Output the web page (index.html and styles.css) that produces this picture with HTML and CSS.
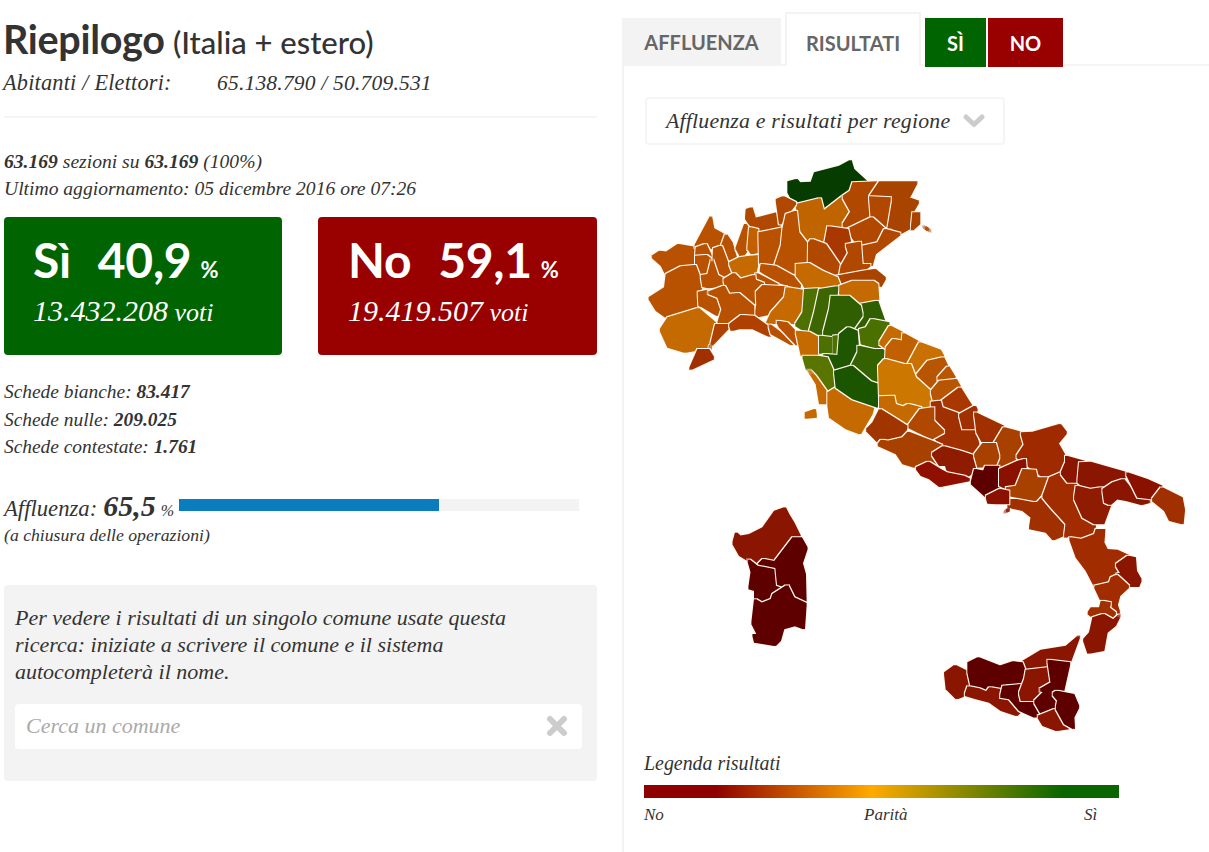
FILE: index.html
```html
<!DOCTYPE html>
<html lang="it">
<head>
<meta charset="utf-8">
<title>Riepilogo</title>
<link rel="stylesheet" href="styles.css">
</head>
<body>
<main class="page">
  <section class="left">
    <h1 class="title">Riepilogo <small>(Italia + estero)</small></h1>
    <p class="population"><span class="pop-label">Abitanti / Elettori:</span><span>65.138.790 / 50.709.531</span></p>
    <hr class="rule">
    <p class="meta"><b>63.169</b> sezioni su <b>63.169</b> (100%)</p>
    <p class="meta">Ultimo aggiornamento: 05 dicembre 2016 ore 07:26</p>
    <div class="boxes">
      <div class="box yes">
        <div class="box-head"><span class="box-name">Sì</span><span class="box-num">40,9</span><span class="box-pct">%</span></div>
        <div class="box-votes"><span class="vnum">13.432.208</span> voti</div>
      </div>
      <div class="box no">
        <div class="box-head"><span class="box-name">No</span><span class="box-num">59,1</span><span class="box-pct">%</span></div>
        <div class="box-votes"><span class="vnum">19.419.507</span> voti</div>
      </div>
    </div>
    <ul class="ballots">
      <li>Schede bianche: <b>83.417</b></li>
      <li>Schede nulle: <b>209.025</b></li>
      <li>Schede contestate: <b>1.761</b></li>
    </ul>
    <div class="turnout">
      <span class="t-label">Affluenza:</span> <b class="t-num">65,5</b> <span class="t-pct">%</span>
      <div class="t-bar"><div class="t-fill"></div></div>
    </div>
    <p class="t-note">(a chiusura delle operazioni)</p>
    <div class="search">
      <p class="search-text">Per vedere i risultati di un singolo comune usate questa ricerca: iniziate a scrivere il comune e il sistema autocompleterà il nome.</p>
      <div class="search-input">
        <span class="placeholder">Cerca un comune</span>
        <svg class="x-icon" width="22" height="22" viewBox="0 0 22 22"><path d="M4 4 18 18M18 4 4 18" stroke="#ccc" stroke-width="6" stroke-linecap="round" fill="none"/></svg>
      </div>
    </div>
  </section>
  <section class="right">
    <nav class="tabs">
      <span class="tab">AFFLUENZA</span>
      <span class="tab active">RISULTATI</span>
      <span class="tab t-yes">SÌ</span>
      <span class="tab t-no">NO</span>
    </nav>
    <div class="panel">
      <div class="select">
        <span>Affluenza e risultati per regione</span>
        <svg width="22" height="14" viewBox="0 0 22 14"><path d="M3 3 11 10.500 19 3" stroke="#ccc" stroke-width="5" stroke-linecap="round" stroke-linejoin="round" fill="none"/></svg>
      </div>
      <svg class="map" width="570" height="600" viewBox="630 150 570 600">
        <defs>
          <filter id="grow" x="-15%" y="-15%" width="130%" height="130%" color-interpolation-filters="sRGB" primitiveUnits="userSpaceOnUse">
            <feMorphology in="SourceGraphic" operator="dilate" radius="3.600" result="body"/>
            <feMorphology in="SourceGraphic" operator="dilate" radius="6.600" result="outer"/>
            <feFlood flood-color="#fff8f0"/>
            <feComposite in2="outer" operator="in" result="edge"/>
            <feMerge><feMergeNode in="edge"/><feMergeNode in="body"/></feMerge>
          </filter>
        </defs>
        <g class="prov" transform="translate(640 150) scale(.33333)">
          <polygon fill="#063c00" points="445,97 470,90 478,100 515,98 525,70 600,50 632,33 640,60 680,97 640,100 632,125 590,145 550,187 540,150 480,155 458,150 445,125"/>
          <polygon fill="#c06400" points="470,165 540,148 550,187 610,140 635,185 610,225 622,240 565,230 555,285 515,268 490,280 470,245 475,200"/>
          <polygon fill="#b04800" points="610,140 632,125 640,100 717,97 688,142 695,200 622,238 610,225 635,185"/>
          <polygon fill="#a84400" points="720,97 830,97 805,145 835,155 815,190 825,225 780,250 755,232 735,235 750,145 690,142"/>
          <polygon fill="#b04800" points="690,142 750,145 735,235 695,205"/>
          <polygon fill="#b04800" points="695,205 735,240 715,280 660,290 622,240"/>
          <polygon fill="#a84400" points="820,190 838,190 838,220 815,240"/>
          <polygon fill="#a84400" points="848,228 860,234 874,245 860,238"/>
          <polygon fill="#b04800" points="735,240 780,252 705,310 695,345 660,350 668,290 715,280"/>
          <polygon fill="#a83800" points="565,232 622,240 630,275 615,290 625,310 605,350 575,300 555,285"/>
          <polygon fill="#b04800" points="515,270 555,285 600,350 590,385 545,365 505,335 495,295"/>
          <polygon fill="#b04800" points="620,285 660,278 665,345 690,345 660,370 600,378 605,350 628,310"/>
          <polygon fill="#a84400" points="590,380 670,365 705,360 735,385 722,408 695,392 630,395 600,410"/>
          <polygon fill="#b85200" points="37,320 60,305 80,308 115,285 163,293 165,345 125,352 80,375 65,345"/>
          <polygon fill="#b85200" points="165,290 213,200 220,238 257,258 243,292 222,298 197,282"/>
          <polygon fill="#b85200" points="170,295 197,285 216,325 198,318 168,320"/>
          <polygon fill="#b85200" points="168,320 198,318 216,332 205,375 185,380 168,345"/>
          <polygon fill="#b85200" points="28,445 75,415 80,375 125,352 165,348 186,405 178,428 176,475 110,495 85,505 50,480"/>
          <polygon fill="#b85200" points="258,255 275,280 288,325 268,340 245,292"/>
          <polygon fill="#b85200" points="222,298 243,290 260,335 280,370 250,390 232,375 220,340"/>
          <polygon fill="#b85200" points="216,330 232,378 250,388 248,407 205,412 190,408 185,378 205,375"/>
          <polygon fill="#b85200" points="290,295 315,225 330,225 325,295 305,322"/>
          <polygon fill="#c46a00" points="270,340 300,325 330,320 358,318 345,372 300,388 280,365"/>
          <polygon fill="#b04800" points="320,180 335,175 345,207 412,190 420,235 358,245 330,222 318,205"/>
          <polygon fill="#c06000" points="330,235 352,240 356,305 335,310 325,295"/>
          <polygon fill="#b85200" points="358,250 432,235 425,290 403,345 360,340"/>
          <polygon fill="#b04800" points="410,150 430,142 466,160 440,195 420,222"/>
          <polygon fill="#b85200" points="440,195 468,185 475,250 498,280 497,338 470,350 456,378 405,350 425,290 430,240"/>
          <polygon fill="#b85200" points="365,345 405,350 455,378 483,390 478,415 415,395 362,362"/>
          <polygon fill="#b85200" points="350,372 413,405 408,412 370,400 345,385"/>
          <polygon fill="#b85200" points="253,390 282,372 300,390 343,378 345,392 370,402 350,430 355,480 340,470 295,430 265,435"/>
          <polygon fill="#b85200" points="370,408 438,412 430,445 395,490 345,500 352,465 350,428"/>
          <polygon fill="#c46a00" points="440,415 488,422 490,490 465,520 425,515 380,522 395,490 435,445"/>
          <polygon fill="#b85200" points="176,428 205,422 235,440 248,480 232,495 190,470 178,465"/>
          <polygon fill="#b85200" points="205,428 252,410 265,435 295,432 340,470 340,495 305,495 270,522 235,520 248,478 235,440"/>
          <polygon fill="#c46a00" points="62,540 85,505 175,477 225,520 205,590 165,600 135,605 85,590"/>
          <polygon fill="#ad4200" points="228,525 272,525 210,590 205,622"/>
          <polygon fill="#a03000" points="175,600 205,600 220,625 150,658"/>
          <polygon fill="#b04000" points="270,525 305,498 340,500 382,530 390,558 340,535 295,535 275,540"/>
          <polygon fill="#b85200" points="388,525 460,578 455,583 395,550"/>
          <polygon fill="#b85200" points="412,515 440,520 475,555 472,585 420,530"/>
          <polygon fill="#c46a00" points="470,345 505,342 545,365 590,385 600,410 560,412 500,420 490,400 470,375"/>
          <polygon fill="#c46a00" points="600,410 640,395 698,395 712,405 715,452 660,462 600,430"/>
          <polygon fill="#4e7000" points="495,420 535,418 520,490 505,525 500,545 468,525 490,490"/>
          <polygon fill="#3d6600" points="540,420 592,412 590,435 570,445 575,480 555,525 550,560 510,545 525,490"/>
          <polygon fill="#2f5f00" points="660,465 712,455 733,515 697,505 680,535 640,540 665,498"/>
          <polygon fill="#2f5f00" points="575,440 625,440 660,470 665,495 640,530 560,565 552,550 570,480"/>
          <polygon fill="#4a7000" points="695,510 745,520 748,550 720,598 665,580 660,540 680,535"/>
          <polygon fill="#c46a00" points="470,545 505,548 535,565 540,610 505,620 485,615"/>
          <polygon fill="#4e7000" points="540,560 578,565 578,608 540,608"/>
          <polygon fill="#4e7000" points="580,560 596,558 595,612 580,610"/>
          <polygon fill="#1f5600" points="600,555 625,535 650,545 655,605 630,650 590,660 570,645 565,625 550,615 595,618"/>
          <polygon fill="#356200" points="655,590 700,600 745,600 715,700 690,695 635,650 655,610"/>
          <polygon fill="#5a7400" points="490,620 530,620 560,625 585,680 580,720 560,730 525,680 500,655"/>
          <polygon fill="#c46a00" points="505,660 530,700 540,760 565,760 560,730 525,680"/>
          <polygon fill="#c46a00" points="565,730 590,715 640,750 700,770 695,790 660,850 620,835 570,800 565,765"/>
          <polygon fill="#1c5500" points="585,665 635,650 690,697 715,705 715,770 640,745 590,710"/>
          <polygon fill="#c46a00" points="497,790 525,780 528,800 497,803"/>
        </g>
        <g class="prov" transform="translate(860 310) scale(.33333)">
          <polygon fill="#c46a00" points="90,50 128,70 128,95 100,90 80,115 60,100"/>
          <polygon fill="#c06000" points="130,72 180,100 145,165 130,165 78,150 80,115 100,90 128,95"/>
          <polygon fill="#c87000" points="180,100 240,122 250,140 205,155 180,170 165,190 145,165"/>
          <polygon fill="#b85500" points="205,155 250,145 262,170 235,205 240,215 215,245 175,235 165,205"/>
          <polygon fill="#cc7800" points="57,170 75,150 130,165 150,165 165,205 215,250 215,285 182,295 145,285 130,293 105,285 100,260 60,260"/>
          <polygon fill="#b85500" points="265,172 285,205 240,218 235,205"/>
          <polygon fill="#b85500" points="288,210 300,232 250,270 222,272 215,245 240,215"/>
          <polygon fill="#c46a00" points="60,262 100,260 105,285 130,293 145,285 182,295 145,345 105,325 60,290"/>
          <polygon fill="#a83800" points="300,235 335,290 300,312 245,300 242,278"/>
          <polygon fill="#a03000" points="215,278 240,275 245,295 300,315 305,350 345,360 360,425 340,435 300,420 280,430 250,405 215,375 250,365 220,330"/>
          <polygon fill="#b04800" points="182,300 220,295 220,335 250,365 215,385 145,350"/>
          <polygon fill="#a03500" points="40,340 60,300 100,325 140,350 130,380 85,395 70,385 55,395 20,360"/>
          <polygon fill="#a84000" points="145,368 215,395 245,408 218,432 240,470 205,455 165,470 130,460 110,430 55,405 65,392 85,395 130,385"/>
          <polygon fill="#8f1c00" points="218,432 250,412 300,425 345,440 355,470 320,500 265,490 258,465 240,465"/>
          <polygon fill="#8f1000" points="170,475 205,458 240,480 258,490 310,500 330,510 240,528 210,505 185,495"/>
          <polygon fill="#a03000" points="300,315 345,290 350,300 345,355 310,355"/>
          <polygon fill="#a03000" points="345,310 430,350 405,400 370,398 352,365"/>
          <polygon fill="#a84000" points="432,355 490,370 495,405 470,450 415,470 410,435 405,400"/>
          <polygon fill="#a02a00" points="485,370 520,368 600,345 618,368 592,400 612,435 618,460 600,485 555,505 525,480 495,460 472,440 495,405"/>
          <polygon fill="#a84000" points="370,402 405,402 415,440 405,465 355,470 345,435"/>
          <polygon fill="#a03000" points="445,570 525,570 550,565 580,600 620,630 610,675 580,688 560,665 510,655 515,620 490,600 445,590"/>
          <polygon fill="#5e0000" points="345,480 372,485 378,470 415,470 420,540 380,560 335,520"/>
          <polygon fill="#8a1000" points="420,480 475,455 495,450 497,478 485,510 470,535 440,535 420,525"/>
          <polygon fill="#a84000" points="490,480 525,482 530,505 565,505 565,525 525,570 445,555 440,535 470,530"/>
          <polygon fill="#8a1000" points="380,560 420,540 445,545 445,580 410,580 385,578"/>
          <polygon fill="#8a1000" points="432,608 445,597 448,600"/>
          <polygon fill="#a02c00" points="570,505 605,490 635,515 655,520 645,560 670,620 705,645 700,675 665,690 635,675 615,680 620,640 575,590 550,560"/>
          <polygon fill="#8a1500" points="618,440 682,458 655,515 625,515 605,490 618,460"/>
          <polygon fill="#8a1500" points="660,460 690,458 800,490 790,510 725,535 690,545 655,515"/>
          <polygon fill="#8f1c00" points="650,530 690,540 725,535 752,580 730,640 705,640 670,620 645,565"/>
          <polygon fill="#8a1500" points="730,540 760,520 790,510 830,560 870,575 845,582 800,570 770,565 750,582 735,575"/>
          <polygon fill="#8a1000" points="800,490 860,510 905,530 875,565 835,560"/>
          <polygon fill="#a03000" points="905,535 965,565 972,600 968,640 930,630 915,600 878,570"/>
        </g>
        <g class="prov" transform="translate(1060 530) scale(.33333)">
          <polygon fill="#a02c00" points="30,25 65,30 105,15 110,0 133,0 130,40 140,60 170,62 205,78 170,105 185,130 155,145 150,158 105,168 80,120 50,80"/>
          <polygon fill="#8a1500" points="205,80 225,85 228,125 242,150 235,168 210,168 170,135 185,130 170,105"/>
          <polygon fill="#a02c00" points="105,170 150,160 155,145 170,138 205,170 178,195 170,225 178,250 145,235 150,220 125,212"/>
          <polygon fill="#a03000" points="125,215 150,220 145,235 165,250 160,270 130,255 105,265 85,250 95,235 120,235"/>
          <polygon fill="#8a1500" points="100,265 130,255 160,272 180,255 165,285 140,305 130,360 85,368 72,330 90,310"/>
        </g>
        <g class="prov" transform="translate(720 500) scale(.33333)">
          <polygon fill="#8a1500" points="905,488 965,452 1040,440 1078,408 1048,490 1020,480 985,482 982,505 945,510 920,510"/>
          <polygon fill="#8a1500" points="705,498 740,515 750,545 735,585 710,595 680,565 675,520"/>
          <polygon fill="#5e0000" points="745,490 775,475 840,500 880,487 905,490 920,530 885,560 860,548 810,578 780,560 755,560 745,515"/>
          <polygon fill="#8a1500" points="745,562 775,568 800,578 810,565 840,570 845,590 880,600 905,630 890,645 845,630 810,605 770,595 737,585"/>
          <polygon fill="#5e0000" points="850,560 905,555 900,590 940,600 965,640 945,650 900,630 870,595 843,590"/>
          <polygon fill="#8a1500" points="920,512 985,505 990,550 960,570 975,575 945,600 905,600 900,580 915,540"/>
          <polygon fill="#5e0000" points="985,482 1048,490 1030,570 1000,580 1015,600 1000,625 965,640 945,605 975,575 960,570 995,550"/>
          <polygon fill="#8a1500" points="955,650 1005,630 1035,670 1045,685 1010,690 970,675"/>
          <polygon fill="#5e0000" points="1010,575 1060,585 1075,620 1060,650 1062,685 1035,670 1010,625 1015,600 1000,582"/>
          <polygon fill="#8a1500" points="48,100 60,110 90,105 130,85 165,35 195,25 205,45 220,70 240,110 220,115 190,150 180,175 165,185 130,178 110,190 85,180 60,165 40,130"/>
          <polygon fill="#5e0000" points="220,115 243,115 260,145 245,190 255,225 257,310 220,295 202,258 185,270 165,255 160,210 110,200 130,180 165,187"/>
          <polygon fill="#5e0000" points="85,180 110,200 160,210 165,260 185,268 160,285 155,300 125,310 105,300 105,270 88,265 95,215"/>
          <polygon fill="#5e0000" points="105,300 125,312 155,300 160,285 202,258 220,295 257,312 252,385 225,375 190,385 180,420 165,435 105,425 100,405 115,405 97,370"/>
        </g>
      </svg>
      <div class="legend">
        <div class="legend-title">Legenda risultati</div>
        <div class="legend-bar"></div>
        <div class="legend-labels"><span>No</span><span>Parità</span><span>Sì</span></div>
      </div>
    </div>
  </section>
</main>
</body>
</html>
```
FILE: styles.css
```css
* { box-sizing: border-box; }
html, body { margin: 0; padding: 0; background: #fff; }
body {
  color: #333;
  font-family: "Liberation Serif", "Times New Roman", serif;
  font-style: italic;
  overflow: hidden;
}
.page { display: flex; width: 1209px; height: 852px; overflow: hidden; }

.left { width: 593px; margin-left: 4px; flex: none; }
.title {
  margin: 14px 0 0 -1px;
  font: 700 39.500px/50px Lato, sans-serif;
  color: #333;
  letter-spacing: -.3px;
  white-space: nowrap;
}
.title small { font-size: 31px; font-weight: 500; letter-spacing: 0; margin-left: -1px; }
.population { margin: 1px 0 0 -1px; font-size: 21.500px; line-height: 30px; display: flex; letter-spacing: .2px; }
.pop-label { width: 214px; font-size: 22.300px; }
.rule { margin: 18px 0 0; border: 0; height: 2px; background: #f5f5f5; }
.meta { margin: 0; font-size: 19.600px; line-height: 27px; }
.rule + .meta { margin-top: 30px; }
.meta b { font-weight: 700; }

.boxes { display: flex; justify-content: space-between; margin-top: 15px; }
.box { height: 138px; border-radius: 4px; color: #fff; padding: 15px 0 0 29px; }
.box.yes { width: 278px; background: #006400; }
.box.no { width: 279px; background: #990000; padding-left: 30px; }
.box-head { font: 700 48px/56px Lato, sans-serif; white-space: nowrap; letter-spacing: -.3px; }
.box-name { margin-right: 27px; }
.box-pct { font-size: 22px; margin-left: 9px; }
.box-votes { font-size: 26px; line-height: 36px; margin-top: -5px; }
.vnum { font-size: 30px; }

.ballots { list-style: none; margin: 23px 0 0; padding: 0; font-size: 19.400px; line-height: 27.500px; }
.turnout { display: flex; align-items: baseline; margin-top: 30px; font-size: 22.700px; line-height: 30px; position: relative; }
.t-label { margin-right: 6px; }
.t-num { font: italic 700 30px/30px "Liberation Serif", serif; margin-right: 5px; }
.t-pct { font-size: 16px; }
.t-bar { position: absolute; left: 175px; top: 8px; width: 400px; height: 12px; background: #f3f3f3; }
.t-fill { width: 65%; height: 100%; background: #0b7cbd; }
.t-note { margin: -3px 0 0; font-size: 17.700px; line-height: 24px; }

.search { margin-top: 38px; height: 196px; background: #f3f3f3; border-radius: 4px; padding: 19px 15px 0 11px; }
.search-text { margin: 0; font-size: 22px; line-height: 27px; width: 520px; }
.search-input {
  display: flex; align-items: center; justify-content: space-between;
  height: 45px; margin-top: 19px; padding: 0 4px 0 11px;
  background: #fff; border-radius: 4px; font-size: 22px; color: #aaa;
}
.x-icon { display: block; margin-right: 10px; }

.right { width: 587px; margin-left: 25px; flex: none; }
.tabs { display: flex; align-items: flex-end; height: 66px; padding-top: 12px; border-bottom: 2px solid #f5f5f5; }
.tab {
  display: flex; align-items: center; justify-content: center;
  height: 48px; margin-bottom: -2px; font: 700 20px/1 Lato, sans-serif; color: #666;
}
.tab:first-child { width: 159px; background: #f3f3f3; margin-right: 4px; }
.tab.active { width: 136px; height: 54px; background: #fff; border: 2px solid #f3f3f3; border-bottom: 0; padding-top: 5px; margin-right: 4px; }
.t-yes { width: 61px; height: 49px; margin-bottom: -3px; background: #006400; color: #fff; margin-right: 2px; }
.t-no { width: 75px; height: 49px; margin-bottom: -3px; background: #990000; color: #fff; }

.panel { border-left: 2px solid #f3f3f3; padding: 31px 0 0 20px; height: 786px; }
.select {
  display: flex; align-items: center; justify-content: space-between;
  width: 360px; height: 48px; margin-left: 1px; padding: 0 18px 0 19px;
  border: 2px solid #f5f5f5; border-radius: 4px; font-size: 21.800px; color: #333; letter-spacing: .2px;
}
.map { display: block; margin: 5px 0 0 -14px; }
.legend { margin-top: 1px; width: 475px; }
.legend-title { font-size: 19.900px; line-height: 24px; }
.legend-bar { height: 13px; margin-top: 10px; background: linear-gradient(90deg, #8f0000 0%, #8f0000 15%, #ffaa00 48%, #0a6600 88%, #0a6600 100%); }
.legend-labels { display: flex; margin-top: 7px; font-size: 17px; line-height: 20px; }
.legend-labels span:nth-child(1) { width: 220px; }
.legend-labels span:nth-child(2) { width: 220px; }

.prov polygon { filter: url(#grow); }
```
